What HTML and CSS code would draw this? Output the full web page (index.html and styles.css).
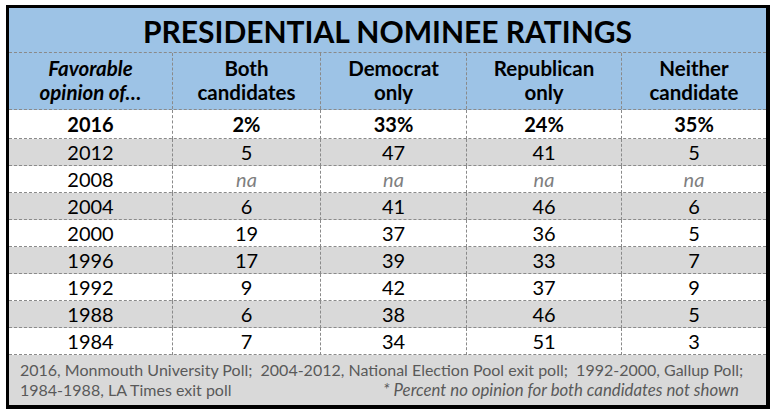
FILE: index.html
```html
<!DOCTYPE html>
<html>
<head>
<meta charset="utf-8">
<link rel="stylesheet" href="styles.css">
</head>
<body>
<div class="frame">
  <div class="title">PRESIDENTIAL NOMINEE RATINGS</div>
  <div class="row head">
    <div class="cell"><i>Favorable<br>opinion of…</i></div>
    <div class="cell">Both<br>candidates</div>
    <div class="cell">Democrat<br>only</div>
    <div class="cell">Republican<br>only</div>
    <div class="cell">Neither<br>candidate</div>
  </div>
  <div class="row top">
    <div class="cell">2016</div><div class="cell">2%</div><div class="cell">33%</div><div class="cell">24%</div><div class="cell">35%</div>
  </div>
  <div class="row data grey">
    <div class="cell">2012</div><div class="cell">5</div><div class="cell">47</div><div class="cell">41</div><div class="cell">5</div>
  </div>
  <div class="row data">
    <div class="cell">2008</div><div class="cell na">na</div><div class="cell na">na</div><div class="cell na">na</div><div class="cell na">na</div>
  </div>
  <div class="row data grey">
    <div class="cell">2004</div><div class="cell">6</div><div class="cell">41</div><div class="cell">46</div><div class="cell">6</div>
  </div>
  <div class="row data">
    <div class="cell">2000</div><div class="cell">19</div><div class="cell">37</div><div class="cell">36</div><div class="cell">5</div>
  </div>
  <div class="row data grey">
    <div class="cell">1996</div><div class="cell">17</div><div class="cell">39</div><div class="cell">33</div><div class="cell">7</div>
  </div>
  <div class="row data">
    <div class="cell">1992</div><div class="cell">9</div><div class="cell">42</div><div class="cell">37</div><div class="cell">9</div>
  </div>
  <div class="row data grey">
    <div class="cell">1988</div><div class="cell">6</div><div class="cell">38</div><div class="cell">46</div><div class="cell">5</div>
  </div>
  <div class="row data">
    <div class="cell">1984</div><div class="cell">7</div><div class="cell">34</div><div class="cell">51</div><div class="cell">3</div>
  </div>
  <div class="foot">
    <div class="src">2016, Monmouth University Poll;&nbsp; 2004-2012, National Election Pool exit poll;&nbsp; 1992-2000, Gallup Poll;</div>
    <div class="line2">
      <span>1984-1988, LA Times exit poll</span>
      <span class="note">* Percent no opinion for both candidates not shown</span>
    </div>
  </div>
</div>
</body>
</html>
```

FILE: styles.css
```css
html, body {
  margin: 0;
  padding: 0;
  background: #ffffff;
}
body {
  padding: 5px 0 0 6px;
  font-family: Lato, "Liberation Sans", sans-serif;
  color: #000;
}
.frame {
  width: 757px;
  border-style: solid;
  border-color: #000;
  border-width: 3px 4px 4px 3px;
}
.title {
  background: #9dc3e6;
  border-bottom: 1px dashed #8a8a8a;
  font-weight: bold;
  font-size: 30px;
  line-height: 44px;
  text-align: center;
  padding-top: 1px;
  height: 43px;
}
.row {
  display: grid;
  grid-template-columns: 164px 148px 146px 155px 144px;
  border-bottom: 1px dashed #8a8a8a;
}
.cell {
  border-right: 1px dashed #8a8a8a;
  text-align: center;
  font-size: 20px;
}
.cell:last-child {
  border-right: none;
}
.head {
  background: #9dc3e6;
  height: 56px;
}
.head .cell {
  font-weight: bold;
  font-size: 20.5px;
  line-height: 24px;
  padding-top: 3px;
}
.top {
  height: 28px;
  background: #fff;
}
.top .cell {
  font-weight: bold;
  line-height: 29px;
}
.data {
  height: 26px;
  background: #fff;
}
.data .cell {
  line-height: 27px;
}
.grey {
  background: #d9d9d9;
}
.na {
  color: #7f7f7f;
  font-style: italic;
}
.foot {
  height: 50px;
  background: #d9d9d9;
  color: #595959;
  font-size: 16px;
  line-height: 20px;
  padding: 5px 27px 0 11px;
  box-sizing: border-box;
  white-space: nowrap;
}
.line2 {
  display: flex;
  justify-content: space-between;
  align-items: baseline;
}
.note {
  font-style: italic;
  font-size: 16.8px;
}
```
